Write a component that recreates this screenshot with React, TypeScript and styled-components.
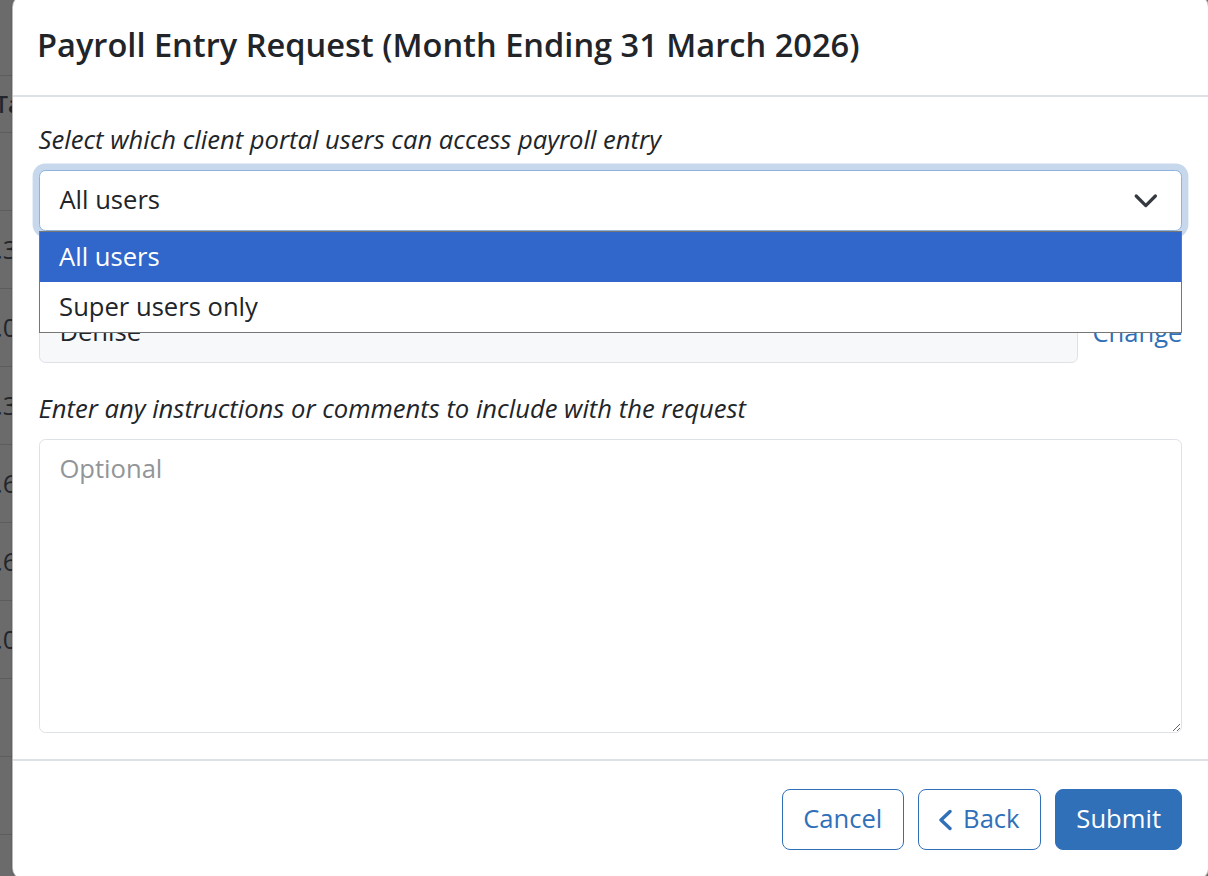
import React from "react";
import styled, { createGlobalStyle } from "styled-components";

const GlobalStyle = createGlobalStyle`
  html, body { margin: 0; padding: 0; }
  body {
    font-family: "Open Sans", "Noto Sans", sans-serif;
    overflow: hidden;
    background: #6b6b6b;
  }
  * { box-sizing: border-box; }
`;

const Viewport = styled.div`
  position: relative;
  width: 1208px;
  height: 876px;
  overflow: hidden;
  background: #6b6b6b;
`;

const BackTable = styled.div`
  display: flex;
  flex-direction: column;
  padding-top: 75px;
`;

const BackRow = styled.div<{ $h: number }>`
  height: ${(p) => p.$h}px;
  border-top: 1px solid #5d5d5d;
  display: flex;
  align-items: center;
  font-size: 25.6px;
  color: #22262c;
  white-space: nowrap;
`;

const BackCell = styled.span<{ $head?: boolean }>`
  margin-left: ${(p) => (p.$head ? "-5px" : "-4px")};
  font-weight: ${(p) => (p.$head ? 600 : 400)};
  font-size: ${(p) => (p.$head ? "23px" : "25.6px")};
`;

const Modal = styled.div`
  position: absolute;
  left: 12px;
  top: -5px;
  width: 1197px;
  height: 885px;
  background: #fff;
  border: 1px solid rgba(0, 0, 0, 0.28);
  border-radius: 12px;
  box-shadow: 0 0 2px rgba(0, 0, 0, 0.25);
  display: flex;
  flex-direction: column;
  color: #212529;
`;

const Header = styled.div`
  padding: 24px 25.6px 25.6px 24px;
  border-bottom: 2px solid #dee2e6;
`;

const Title = styled.h5`
  margin: 0;
  font-size: 32.6px;
  font-weight: 600;
  line-height: 49px;
  color: #212529;
`;

const Body = styled.div`
  padding: 24px 25.6px 25.6px;
  display: flex;
  flex-direction: column;
`;

const Group = styled.div<{ $mb: number }>`
  display: flex;
  flex-direction: column;
  margin-bottom: ${(p) => p.$mb}px;
`;

const Label = styled.label`
  font-style: italic;
  font-size: 25.6px;
  line-height: 38.4px;
  margin-bottom: 11px;
  color: #212529;
`;

const SelectWrap = styled.div`
  position: relative;
`;

const SelectBox = styled.div`
  height: 60.8px;
  border: 1.6px solid #8db3dc;
  border-radius: 6.4px;
  box-shadow: 0 0 0 6.4px rgba(48, 112, 185, 0.27);
  padding: 9.6px 57.6px 9.6px 19.8px;
  font-size: 25.6px;
  line-height: 38.4px;
  color: #212529;
  background: #fff;
`;

const Chevron = styled.svg`
  position: absolute;
  right: 24px;
  top: 17.6px;
  width: 25.6px;
  height: 25.6px;
`;

const DropList = styled.ul`
  position: absolute;
  left: 0;
  right: 0;
  top: 100%;
  margin: 0;
  padding: 0;
  list-style: none;
  background: #fff;
  border: 1px solid #767676;
  z-index: 5;
`;

const DropOption = styled.li<{ $active?: boolean }>`
  height: 50px;
  line-height: 50px;
  padding-left: 19.5px;
  font-size: 25.6px;
  background: ${(p) => (p.$active ? "#3166cb" : "#fff")};
  color: ${(p) => (p.$active ? "#fff" : "#212529")};
`;

const InlineRow = styled.div`
  display: flex;
  align-items: center;
  gap: 14px;
`;

const ReadonlyInput = styled.div`
  flex: 1;
  height: 60.8px;
  border: 1.6px solid #dee2e6;
  border-radius: 6.4px;
  background: #f7f8fa;
  padding: 9.6px 19.8px;
  font-size: 25.6px;
  line-height: 38.4px;
  color: #212529;
`;

const LinkText = styled.a`
  font-size: 25.6px;
  line-height: 38.4px;
  color: #2f6fb8;
  text-decoration: none;
  padding-top: 2px;
`;

const TextArea = styled.textarea`
  display: block;
  width: 100%;
  height: 294px;
  border: 1.6px solid #dee2e6;
  border-radius: 6.4px;
  padding: 9.6px 19.8px;
  font-family: "Open Sans", sans-serif;
  font-size: 25.6px;
  line-height: 38.4px;
  color: #212529;
  resize: vertical;
  outline: none;
  &::placeholder {
    color: #929598;
  }
`;

const Footer = styled.div`
  border-top: 2px solid #dee2e6;
  padding: 28px 25.6px 28px;
  display: flex;
  justify-content: flex-end;
  gap: 14px;
`;

const Button = styled.button<{ $primary?: boolean }>`
  display: inline-flex;
  align-items: center;
  gap: 11px;
  height: 61.6px;
  padding: 9.6px 20.4px;
  border: 1.6px solid #3070b9;
  border-radius: 8px;
  font-family: "Open Sans", sans-serif;
  font-size: 25.6px;
  line-height: 38.4px;
  background: ${(p) => (p.$primary ? "#3070b9" : "#fff")};
  color: ${(p) => (p.$primary ? "#fff" : "#3070b9")};
  cursor: pointer;
`;

const BackIcon = styled.svg`
  flex-shrink: 0;
  width: 13px;
  height: 22px;
  margin-top: 1px;
`;

const backRows: { h: number; text: string; head?: boolean }[] = [
  { h: 57, text: "Tax", head: true },
  { h: 78, text: "" },
  { h: 78, text: ".34" },
  { h: 78, text: ".00" },
  { h: 78, text: ".34" },
  { h: 78, text: ".67" },
  { h: 78, text: ".67" },
  { h: 78, text: ".00" },
  { h: 78, text: "" },
  { h: 78, text: "" },
  { h: 78, text: "" },
];

export default function App() {
  return (
    <Viewport>
      <GlobalStyle />
      <BackTable>
        {backRows.map((r, i) => (
          <BackRow key={i} $h={r.h}>
            <BackCell $head={r.head}>{r.text}</BackCell>
          </BackRow>
        ))}
      </BackTable>
      <Modal>
        <Header>
          <Title>Payroll Entry Request (Month Ending 31 March 2026)</Title>
        </Header>
        <Body>
          <Group $mb={22}>
            <Label>Select which client portal users can access payroll entry</Label>
            <SelectWrap>
              <SelectBox>All users</SelectBox>
              <Chevron viewBox="0 0 16 16" fill="none">
                <path
                  d="m2 5 6 6 6-6"
                  stroke="#343a40"
                  strokeWidth="2"
                  strokeLinecap="round"
                  strokeLinejoin="round"
                />
              </Chevron>
              <DropList>
                <DropOption $active>All users</DropOption>
                <DropOption>Super users only</DropOption>
              </DropList>
            </SelectWrap>
          </Group>
          <Group $mb={26.6}>
            <Label>Payroll entry will be completed by</Label>
            <InlineRow>
              <ReadonlyInput>Denise</ReadonlyInput>
              <LinkText href="#">Change</LinkText>
            </InlineRow>
          </Group>
          <Group $mb={0}>
            <Label>Enter any instructions or comments to include with the request</Label>
            <TextArea placeholder="Optional" />
          </Group>
        </Body>
        <Footer>
          <Button>Cancel</Button>
          <Button>
            <BackIcon viewBox="0 0 13 22" fill="none">
              <polyline
                points="11,2.5 2,11 11,19.5"
                stroke="#3070b9"
                strokeWidth="3.4"
                strokeLinecap="round"
                strokeLinejoin="round"
              />
            </BackIcon>
            Back
          </Button>
          <Button $primary>Submit</Button>
        </Footer>
      </Modal>
    </Viewport>
  );
}
